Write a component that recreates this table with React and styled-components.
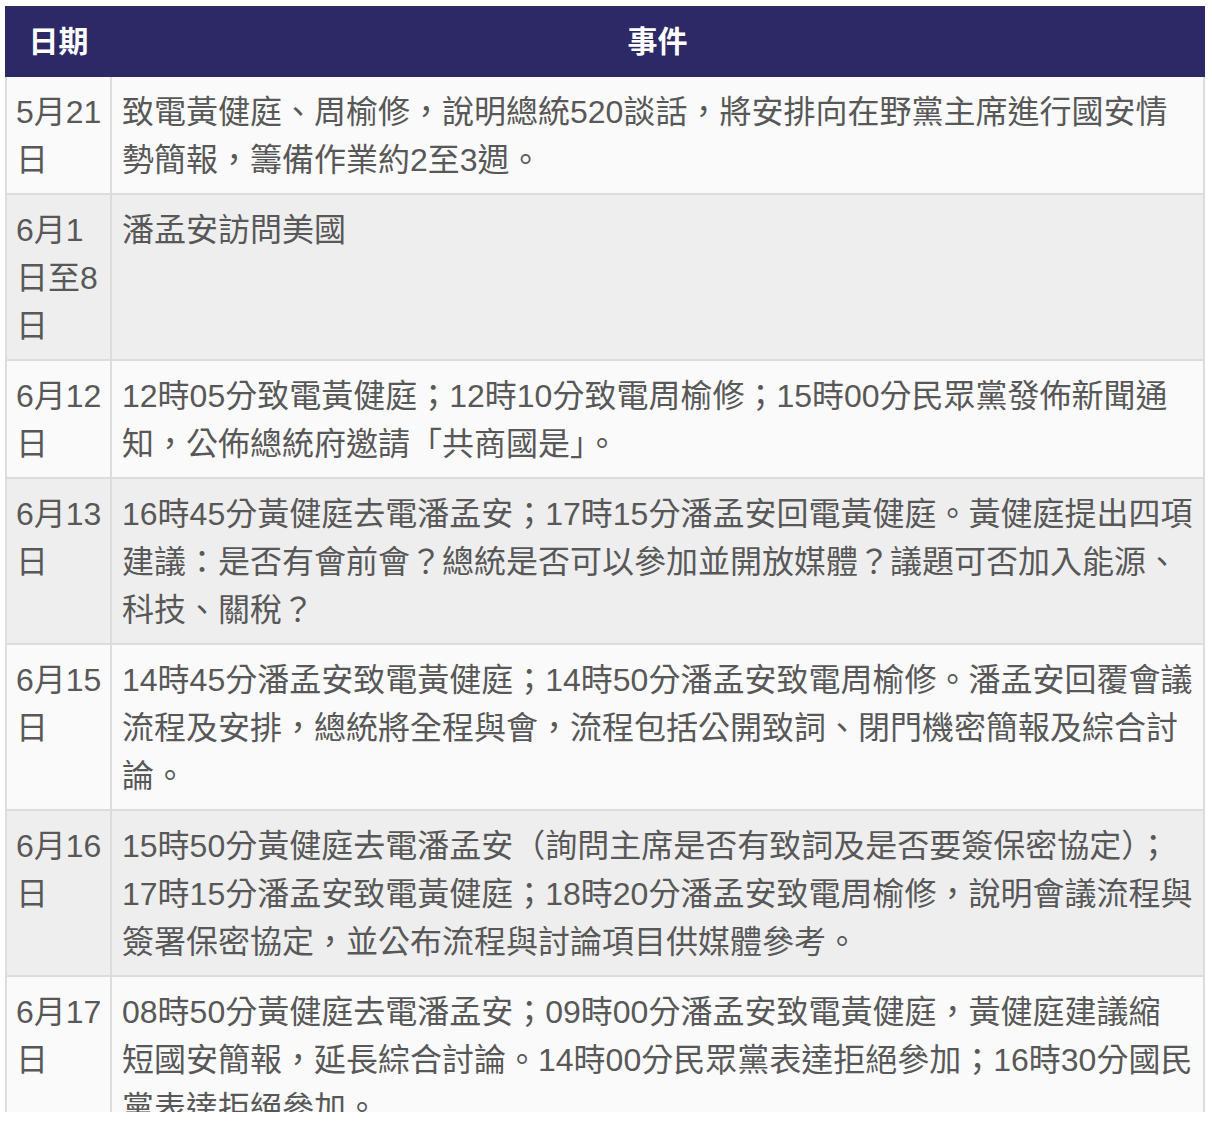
import styled, { createGlobalStyle } from "styled-components";

const GlobalStyle = createGlobalStyle`
    body{
        margin: 0;
        background-color: #ffffff;
        font-family: "Liberation Sans", "Noto Sans CJK TC", sans-serif;
    }
`

const rows = [
    {
        date: ["5月21", "日"],
        text: ["致電黃健庭、周榆修，說明總統520談話，將安排向在野黨主席進行國安情", "勢簡報，籌備作業約2至3週。"],
    },
    {
        date: ["6月1", "日至8", "日"],
        text: ["潘孟安訪問美國"],
    },
    {
        date: ["6月12", "日"],
        text: ["12時05分致電黃健庭；12時10分致電周榆修；15時00分民眾黨發佈新聞通", "知，公佈總統府邀請「共商國是」。"],
    },
    {
        date: ["6月13", "日"],
        text: ["16時45分黃健庭去電潘孟安；17時15分潘孟安回電黃健庭。黃健庭提出四項", "建議：是否有會前會？總統是否可以參加並開放媒體？議題可否加入能源、", "科技、關稅？"],
    },
    {
        date: ["6月15", "日"],
        text: ["14時45分潘孟安致電黃健庭；14時50分潘孟安致電周榆修。潘孟安回覆會議", "流程及安排，總統將全程與會，流程包括公開致詞、閉門機密簡報及綜合討", "論。"],
    },
    {
        date: ["6月16", "日"],
        text: ["15時50分黃健庭去電潘孟安（詢問主席是否有致詞及是否要簽保密協定）；", "17時15分潘孟安致電黃健庭；18時20分潘孟安致電周榆修，說明會議流程與", "簽署保密協定，並公布流程與討論項目供媒體參考。"],
    },
    {
        date: ["6月17", "日"],
        text: ["08時50分黃健庭去電潘孟安；09時00分潘孟安致電黃健庭，黃健庭建議縮", "短國安簡報，延長綜合討論。14時00分民眾黨表達拒絕參加；16時30分國民", "黨表達拒絕參加。"],
    },
]

export default function App() {
    return (
        <>
            <GlobalStyle />
            <Page>
                <Frame>
                    <Table>
                        <colgroup>
                            <col style={{ width: "105px" }} />
                            <col />
                        </colgroup>
                        <thead>
                            <tr>
                                <HeadCell>日期</HeadCell>
                                <HeadCell>事件</HeadCell>
                            </tr>
                        </thead>
                        <tbody>
                            {rows.map((r, i) => (
                                <Row key={r.date.join("")} shaded={i % 2 === 1}>
                                    <DateCell>
                                        {r.date.map(l => <Line key={l}>{l}</Line>)}
                                    </DateCell>
                                    <EventCell>
                                        {r.text.map(l => <Line key={l}>{l}</Line>)}
                                    </EventCell>
                                </Row>
                            ))}
                        </tbody>
                    </Table>
                </Frame>
            </Page>
        </>
    )
}

const Page = styled.div`
    padding: 6px 7px 0 5px;
`
const Frame = styled.div`
    height: 1106px;
    overflow: hidden;
`
const Table = styled.table`
    width: 100%;
    border-collapse: collapse;
    table-layout: fixed;
    font-size: 32px;
    line-height: 48px;
    color: #585858;
`
const HeadCell = styled.th`
    background-color: #2c2966;
    color: #ffffff;
    font-size: 30px;
    font-weight: 700;
    height: 67px;
    padding: 0 10px;
    text-align: center;
    border: 2px solid #2c2966;
`
const Row = styled.tr`
    background-color: ${props => props.shaded ? "#eeeeee" : "#fafafa"};
`
const DateCell = styled.td`
    vertical-align: top;
    padding: 11px 8px 9px 9px;
    border: 2px solid #dcdcdc;
`
const EventCell = styled.td`
    vertical-align: top;
    padding: 11px 8px 9px 10px;
    border: 2px solid #dcdcdc;
`
const Line = styled.div`
    white-space: nowrap;
`
